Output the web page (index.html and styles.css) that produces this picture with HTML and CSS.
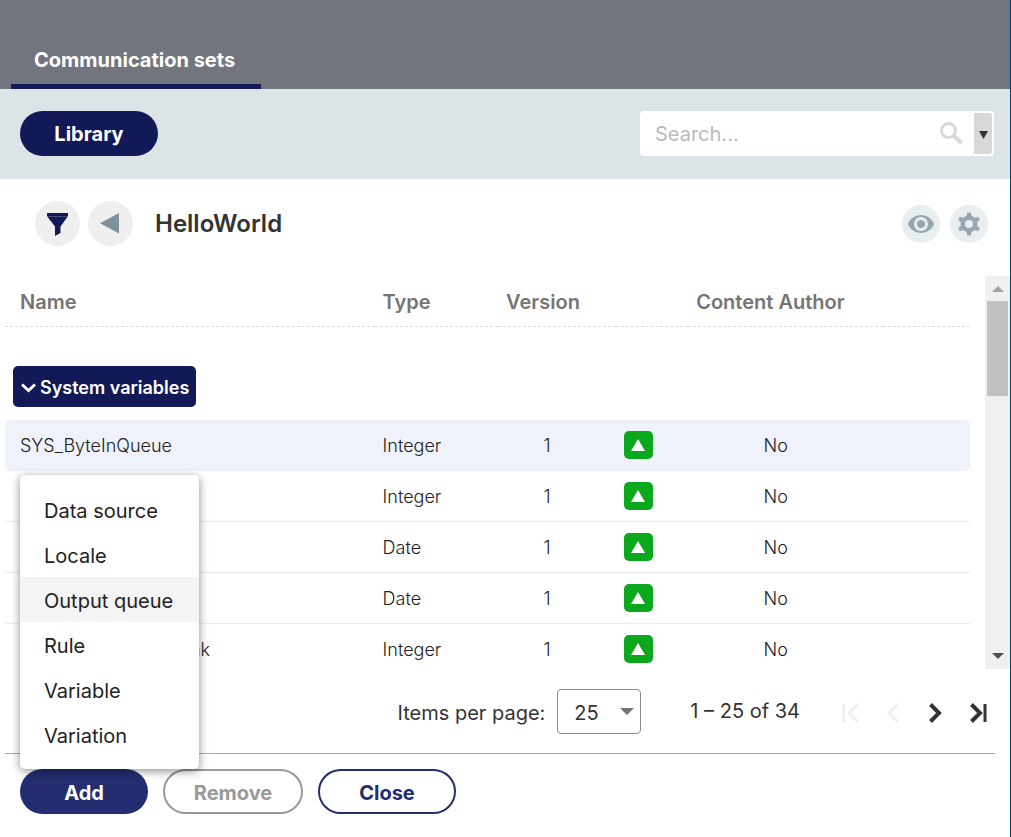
FILE: index.html
```html
<!DOCTYPE html>
<html lang="en">
<head>
<meta charset="utf-8">
<title>Communication sets</title>
<link rel="stylesheet" href="styles.css">
</head>
<body>
<header class="topbar">
  <nav><a class="tab" href="#sets">Communication sets</a></nav>
</header>
<main class="page">
  <div class="toolbar">
    <button class="pill pill-dark" type="button">Library</button>
    <form class="search">
      <input class="search-input" type="search" placeholder="Search..." aria-label="Search">
      <button class="search-go" type="button" aria-label="Run search">
        <svg width="24" height="24" viewBox="0 0 24 24" fill="none" stroke="#d8d8d8"><circle cx="9.500" cy="9.500" r="7" stroke-width="3"/><path d="M14.500 14.500L22.500 22" stroke-width="4"/></svg>
      </button>
      <button class="search-more" type="button" aria-label="Search options">
        <svg width="9" height="8" viewBox="0 0 9 8"><path d="M0 0H9L4.500 8Z" fill="#333"/></svg>
      </button>
    </form>
  </div>
  <div class="heading">
    <button class="round" type="button" aria-label="Filter">
      <svg width="22" height="24" viewBox="0 0 22 24" fill="#111a57"><path d="M0 1H21V4H0Z"/><path d="M0 4.300H21L13.500 14.500V21L8 24V14.500Z"/></svg>
    </button>
    <button class="round" type="button" aria-label="Back">
      <svg width="22" height="21" viewBox="0 0 22 21"><path d="M19 0V20.500L0 10.300Z" fill="#7e919e"/></svg>
    </button>
    <h1 class="title">HelloWorld</h1>
    <button class="round round-small" type="button" aria-label="Preview">
      <svg width="26" height="18" viewBox="0 0 26 18"><path fill="#96a7b2" fill-rule="evenodd" d="M13 0C7 0 2 3.600 0 9C2 14.400 7 18 13 18S24 14.400 26 9C24 3.600 19 0 13 0ZM13 16A7 7 0 1 1 13 2A7 7 0 0 1 13 16Z"/><circle cx="13" cy="9" r="4" fill="#96a7b2"/></svg>
    </button>
    <button class="round round-small" type="button" aria-label="Settings">
      <svg width="24" height="24" viewBox="0 0 24 24"><g fill="#96a7b2"><circle cx="12" cy="12" r="8.500"/><path id="tooth" d="M9.300 5L10.200 .5H13.800L14.700 5Z"/><use href="#tooth" transform="rotate(60 12 12)"/><use href="#tooth" transform="rotate(120 12 12)"/><use href="#tooth" transform="rotate(180 12 12)"/><use href="#tooth" transform="rotate(240 12 12)"/><use href="#tooth" transform="rotate(300 12 12)"/></g><circle cx="12" cy="12" r="4" fill="#e9eef1"/></svg>
    </button>
  </div>
  <section class="list">
    <div class="list-view">
      <table class="grid">
        <colgroup><col class="c-name"><col class="c-type"><col class="c-version"><col class="c-state"><col class="c-author"><col></colgroup>
        <thead>
          <tr><th>Name</th><th>Type</th><th>Version</th><th></th><th>Content Author</th><th></th></tr>
        </thead>
        <tbody>
          <tr class="group"><td colspan="6"><button class="group-toggle" type="button"><svg width="15" height="10" viewBox="0 0 15 10" fill="none" stroke="#fff" stroke-width="3"><path d="M1 1.500L7.500 7.500L14 1.500"/></svg>System variables</button></td></tr>
          <tr class="selected"><td>SYS_ByteInQueue</td><td>Integer</td><td class="mid">1</td><td><span class="state"><svg width="14" height="12" viewBox="0 0 14 12"><path d="M7 0L14 12H0Z" fill="#fff"/></svg></span></td><td class="mid">No</td><td></td></tr>
          <tr><td></td><td>Integer</td><td class="mid">1</td><td><span class="state"><svg width="14" height="12" viewBox="0 0 14 12"><path d="M7 0L14 12H0Z" fill="#fff"/></svg></span></td><td class="mid">No</td><td></td></tr>
          <tr><td></td><td>Date</td><td class="mid">1</td><td><span class="state"><svg width="14" height="12" viewBox="0 0 14 12"><path d="M7 0L14 12H0Z" fill="#fff"/></svg></span></td><td class="mid">No</td><td></td></tr>
          <tr><td></td><td>Date</td><td class="mid">1</td><td><span class="state"><svg width="14" height="12" viewBox="0 0 14 12"><path d="M7 0L14 12H0Z" fill="#fff"/></svg></span></td><td class="mid">No</td><td></td></tr>
          <tr><td><span class="name-end">nk</span></td><td>Integer</td><td class="mid">1</td><td><span class="state"><svg width="14" height="12" viewBox="0 0 14 12"><path d="M7 0L14 12H0Z" fill="#fff"/></svg></span></td><td class="mid">No</td><td></td></tr>
        </tbody>
      </table>
    </div>
    <div class="scrollbar" aria-hidden="true">
      <svg class="scroll-arrow" width="12" height="6" viewBox="0 0 12 6"><path d="M6 0L12 6H0Z" fill="#a3a3a3"/></svg>
      <div class="track"><div class="thumb"></div></div>
      <svg class="scroll-arrow" width="12" height="6" viewBox="0 0 12 6"><path d="M0 0H12L6 6Z" fill="#505050"/></svg>
    </div>
  </section>
  <div class="pager">
    <label class="size-label" for="size">Items per page:</label>
    <div class="size-box">
      <select id="size" class="size"><option>25</option></select>
      <svg class="size-arrow" width="14" height="7" viewBox="0 0 14 7"><path d="M0 0H14L7 7Z" fill="#757575"/></svg>
    </div>
    <span class="range">1 – 25 of 34</span>
    <div class="page-buttons">
      <button type="button" disabled aria-label="First page"><svg width="18" height="20" viewBox="0 0 18 20" fill="none" stroke="#efefef" stroke-width="3"><path d="M2.500 1V19M17 1L8 10L17 19"/></svg></button>
      <button type="button" disabled aria-label="Previous page"><svg width="18" height="20" viewBox="0 0 18 20" fill="none" stroke="#efefef" stroke-width="3"><path d="M14 1L5 10L14 19"/></svg></button>
      <button type="button" aria-label="Next page"><svg width="18" height="20" viewBox="0 0 18 20" fill="none" stroke="#333" stroke-width="4"><path d="M3.500 1.500L12 10L3.500 18.500"/></svg></button>
      <button type="button" aria-label="Last page"><svg width="18" height="20" viewBox="0 0 18 20" fill="none" stroke="#333" stroke-width="4"><path d="M1.500 1.500L10 10L1.500 18.500"/><path stroke-width="3" d="M15 1V19"/></svg></button>
    </div>
  </div>
  <footer class="actions">
    <div class="add">
      <button class="pill pill-add" type="button">Add</button>
      <div class="menu" role="menu">
        <button class="item" type="button" role="menuitem">Data source</button>
        <button class="item" type="button" role="menuitem">Locale</button>
        <button class="item item-active" type="button" role="menuitem">Output queue</button>
        <button class="item" type="button" role="menuitem">Rule</button>
        <button class="item" type="button" role="menuitem">Variable</button>
        <button class="item" type="button" role="menuitem">Variation</button>
      </div>
    </div>
    <button class="pill pill-muted" type="button" disabled>Remove</button>
    <button class="pill pill-line" type="button">Close</button>
  </footer>
</main>
</body>
</html>
```
FILE: styles.css
```css
* { box-sizing: border-box; }
body {
  margin: 0;
  height: 100vh;
  display: flex;
  flex-direction: column;
  font-family: Inter, "Liberation Sans", sans-serif;
  font-size: 20px;
  color: #333;
  background: #fff;
}
button, input, select { font: inherit; color: inherit; margin: 0; padding: 0; border: 0; background: none; }
svg { display: block; flex: none; }

.topbar { background: #72757d; padding: 36px 11px 0; border-right: 1px solid #0b3a6b; }
.topbar nav { display: flex; }
.tab {
  width: 250px;
  padding-left: 23px;
  line-height: 48px;
  font-weight: 700;
  color: #fff;
  text-decoration: none;
  border-bottom: 5px solid #111a57;
}

.page { flex: 1; min-height: 0; display: flex; flex-direction: column; border-right: 1px solid #0b3a6b; }

.toolbar {
  display: flex;
  justify-content: space-between;
  align-items: center;
  height: 90px;
  padding: 0 16px 2px 20px;
  background: #dce4e7;
}
.pill { height: 45px; padding-top: 2px; border-radius: 23px; font-weight: 700; text-align: center; }
.pill-dark { width: 138px; background: #111a57; color: #fff; }
.search {
  display: flex;
  align-items: center;
  width: 354px;
  height: 45px;
  padding: 2px;
  background: #fff;
  border-radius: 4px;
}
.search-input { flex: 1; min-width: 0; padding: 2px 0 0 13px; outline: 0; }
.search-input::placeholder { color: #bababa; opacity: 1; }
.search-go { padding-right: 11px; }
.search-more {
  display: flex;
  align-items: center;
  justify-content: center;
  width: 18px;
  height: 41px;
  padding-top: 4px;
  background: #d8d8d8;
  border-radius: 0 3px 3px 0;
}

.heading { display: flex; align-items: center; gap: 8px; height: 97px; padding: 0 22px 8px 35px; }
.round {
  display: flex;
  align-items: center;
  justify-content: center;
  width: 45px;
  height: 45px;
  border-radius: 50%;
  background: #efefef;
}
.round-small { width: 38px; height: 38px; background: #e9eef1; margin-left: 2px; }
.title { flex: 1; margin: 0 0 0 14px; font-size: 24px; font-weight: 600; }

.list { flex: 1; min-height: 0; display: flex; gap: 15px; padding-left: 5px; }
.list-view { flex: 1; min-width: 0; overflow: hidden; }
.grid { width: 100%; table-layout: fixed; border-collapse: separate; border-spacing: 0; font-size: 18px; }
.c-name { width: 38.3%; }
.c-type { width: 12.8%; }
.c-version { width: 12.2%; }
.c-state { width: 7.5%; }
.c-author { width: 20.2%; }
.grid th {
  height: 51px;
  padding: 2px 8px 0;
  font-size: 20px;
  font-weight: 600;
  text-align: left;
  white-space: nowrap;
  color: #757575;
  border-bottom: 1px dashed #dcdcdc;
}
.grid td { height: 51px; padding: 0 8px; border-bottom: 1px solid #ececec; font-weight: 300; color: #222; }
.grid th:first-child, .grid td:first-child { padding-left: 15px; }
.grid .mid { text-align: center; padding: 0 24px 0 4px; }
.grid .group td { height: 93px; padding: 26px 8px 0; border: 0; }
.grid .selected td { background: #eff2fa; border-color: #eff2fa; }
.grid .selected td:first-child { border-radius: 5px 0 0 5px; }
.grid .selected td:last-child { border-radius: 0 5px 5px 0; }
.group-toggle {
  display: flex;
  align-items: center;
  gap: 4px;
  height: 41px;
  padding: 2px 7px 0 8px;
  border-radius: 5px;
  background: #111a57;
  color: #fff;
  font-weight: 600;
}
.name-end { display: block; width: 190px; text-align: right; }
.state {
  display: flex;
  align-items: center;
  justify-content: center;
  width: 29px;
  height: 28px;
  padding-bottom: 1px;
  border-radius: 5px;
  background: #0ba81d;
}

.scrollbar { display: flex; flex-direction: column; align-items: center; width: 25px; padding: 10px 2px; background: #f0f0f0; }
.track { flex: 1; align-self: stretch; padding-top: 9px; }
.thumb { height: 95px; background: #c1c1c1; }

.pager { display: flex; align-items: center; justify-content: flex-end; height: 84px; padding: 0 22px 0 5px; }
.size-label { padding-top: 4px; }
.size-box { position: relative; margin: 0 49px 0 12px; }
.size { display: block; width: 84px; height: 45px; padding: 4px 0 0 16px; border: 1px solid #8c8c8c; border-radius: 4px; appearance: none; }
.size-arrow { position: absolute; right: 7px; top: 19px; pointer-events: none; }
.page-buttons { display: flex; gap: 25px; margin-left: 41px; padding-top: 4px; }

.actions { display: flex; gap: 15px; height: 84px; margin: 0 15px 0 5px; padding: 15px; border-top: 1px solid #a5a5b5; }
.add { position: relative; }
.pill-add { width: 128px; background: #232d70; color: #fff; }
.pill-muted { width: 140px; border: 2px solid #999; color: #999; }
.pill-line { width: 138px; border: 2px solid #232d70; color: #232d70; }
.menu {
  position: absolute;
  left: 0;
  bottom: 100%;
  width: 179px;
  padding: 12px 0;
  background: #fff;
  border-radius: 5px;
  box-shadow: 0 2px 10px rgba(0, 0, 0, .45);
}
.item { display: block; width: 100%; height: 45px; padding: 2px 0 0 24px; text-align: left; color: #222; white-space: nowrap; }
.item-active { background: #f4f4f4; }
```
